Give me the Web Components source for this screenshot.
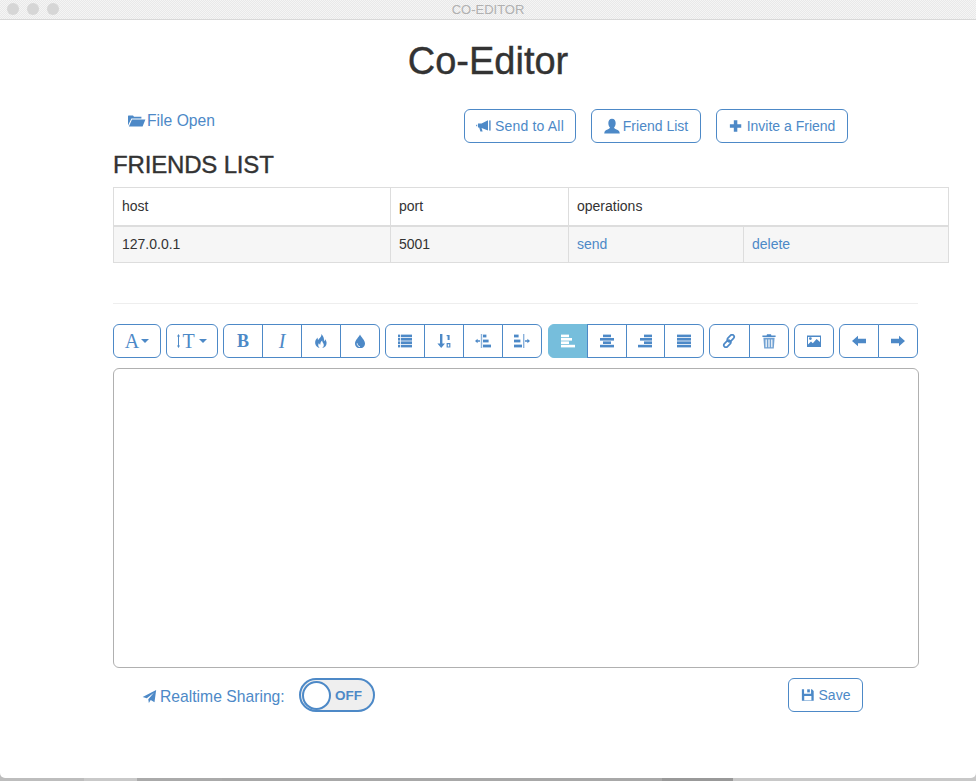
<!DOCTYPE html>
<html><head><meta charset="utf-8">
<style>
html,body{margin:0;padding:0;background:#fff}
body{font-family:"Liberation Sans",Arial,sans-serif;font-size:14px;color:#333}
</style></head><body>
<ce-app>
  <ce-titlebar>CO-EDITOR</ce-titlebar>
  <ce-heading>Co-Editor</ce-heading>
  <ce-actions></ce-actions>
  <ce-friends></ce-friends>
  <ce-toolbar></ce-toolbar>
  <ce-editor></ce-editor>
  <ce-footer></ce-footer>
</ce-app>
<script>
const BLUE='#4d89c7';
const bars=(rows,h=2.6)=>rows.map(([x,w],i)=>`<rect x="${x}" y="${.6+i*3.4}" width="${w}" height="${h}"/>`).join('');
const ICONS={
 folder:'<path d="M0 12.5V3.2Q0 2.6.6 2.6H5L6 3.8H13.4V5.6H3.4L0 12.5Z"/><path d="M4 6.4H17.4L14.6 13.4H.9Z"/>',
 bullhorn:'<path d="M1.2 6.4L.2 7V8L1.2 8.6Z"/><path d="M2 5.4H5.6L12 2.3V12.4L5.6 10L6.6 13.4H4.4L3.2 9.6H2Z"/><rect x="13.2" y="2.4" width="1.4" height="10.2"/>',
 user:'<path d="M7 .6C9.2 .6 10.3 2.4 10.3 4.4C10.3 6.2 9.6 7.7 8.9 8.4C8.9 9.5 9.6 9.9 11 10.4C12.6 11 13.8 11.6 14 14H0C.2 11.6 1.4 11 3 10.4C4.4 9.9 5.1 9.5 5.1 8.4C4.4 7.7 3.7 6.2 3.7 4.4C3.7 2.4 4.8 .6 7 .6Z"/>',
 plus:'<path d="M5 1.5H9V6H13.5V10H9V14.5H5V10H.5V6H5Z"/>',
 send:'<path d="M14.6 1L12.8 14L8.8 11.8L6.8 14.8L6.2 10.8L12.2 4L4.6 9.8L.2 8.4Z"/>',
 save:'<path fill-rule="evenodd" d="M.5 1.5H3V6.5H11V1.5H12L14 3.5V14.5H.5ZM3.2 9V14H11.4V9Z"/><path d="M6.6 1.5H9.6V5H6.6Z"/>',
 updown:'<path d="M1.5 0L3 2.6H2V11.4H3L1.5 14L0 11.4H1V2.6H0Z"/>',
 fire:'<path d="M7.2 0C8 2.6 5.4 4 4.2 6C3.6 5.4 3.6 4.4 3.8 3.6C2 5 .8 7 1.2 9.6C1.6 12 3.6 13.6 5.6 14C4 12.6 3.8 10.6 5 9C5.2 10 5.8 10.6 6.4 10.6C6.2 9 7 7.6 8.2 6.6C8 8.4 9.8 9.4 9.8 11C9.8 12.2 9.2 13.2 8.2 14C10.6 13.6 12.6 11.8 12.6 9C12.6 7.6 12 6.2 11 5.2C11 6 10.6 6.8 10 7.2C10.2 4.4 9.4 1.6 7.2 0Z"/>',
 drop:'<path d="M7 .5C8 3 12 6 12 9.6C12 12.4 9.8 14.4 7 14.4C4.2 14.4 2 12.4 2 9.6C2 6 6 3 7 .5Z"/><path d="M4.2 9.4C4.2 11.2 5.4 12.4 6.8 12.6" fill="none" stroke="#fff" stroke-width="1"/>',
 list:bars([[0,2.2],[0,2.2],[0,2.2],[0,2.2]])+bars([[3,11],[3,11],[3,11],[3,11]]),
 sort:'<path d="M3 0H5.4V9.4H8L4.2 14L.4 9.4H3Z"/><rect x="10.6" y="1" width="2" height="5"/><rect x="9.6" y="1" width="1.4" height="1.2"/><path fill-rule="evenodd" d="M9.6 9H13.4V13.6H9.6ZM10.8 10.2V12.4H12.2V10.2Z"/>',
 indentl:'<path d="M0 7L2.6 4.8V6.3H5V7.7H2.6V9.2Z"/><rect x="5.8" y="0" width="1.4" height="14" opacity=".65"/><rect x="8" y=".6" width="3.4" height="2.8"/><rect x="8" y="5.6" width="5.6" height="2.8"/><rect x="8" y="10.6" width="8" height="2.8"/>',
 indentr:'<rect x="0" y=".6" width="4.6" height="2.8"/><rect x="0" y="5.6" width="6.4" height="2.8"/><rect x="0" y="10.6" width="8" height="2.8"/><rect x="9" y="0" width="1.4" height="14" opacity=".65"/><path d="M16 7L13.4 4.8V6.3H11V7.7H13.4V9.2Z"/>',
 alignl:bars([[0,8],[0,11],[0,8],[0,14]]),
 alignc:bars([[3,8],[0,14],[3,8],[0,14]]),
 alignr:bars([[6,8],[2,12],[6,8],[0,14]]),
 alignj:bars([[0,14],[0,14],[0,14],[0,14]]),
 link:'<g fill="none" stroke="currentColor" stroke-width="1.7"><rect x="4.7" y="2.1" width="8" height="4.2" rx="2.1" transform="rotate(-45 8.7 4.2)"/><rect x="1.3" y="7.7" width="8" height="4.2" rx="2.1" transform="rotate(-45 5.3 9.8)"/></g>',
 trash:'<path d="M5 .2H9L9.4 1.6H13.6V3H.4V1.6H4.6Z"/><path fill-rule="evenodd" d="M1.4 3.8H12.6L11.8 14.6H2.2ZM3.6 5.4V13.2H4.8V5.4ZM6.4 5.4V13.2H7.6V5.4ZM9.2 5.4V13.2H10.4V5.4Z" opacity=".8"/>',
 picture:'<path fill-rule="evenodd" d="M0 1.5H14V13H0ZM3.4 3.2A1.4 1.4 0 1 0 3.41 6A1.4 1.4 0 1 0 3.4 3.2ZM1 10.4L4 7.6L5.8 9.2L9.6 5L13 8V3H1Z"/>',
 left:'<path d="M0 7L6 1.8V4.8H14V9.2H6V12.2Z"/>',
 right:'<path d="M14 7L8 1.8V4.8H0V9.2H8V12.2Z"/>'
};
const VB={folder:'0 0 18 16',updown:'0 0 3 14',bullhorn:'0 0 15 16',send:'0 0 15 16',save:'0 0 15 16',plus:'0 0 15 16',indentl:'0 0 16 14',indentr:'0 0 16 14',trash:'0 0 14 15',user:'0 0 14 14.4'};
class CeIcon extends HTMLElement{
 constructor(){super();const n=this.getAttribute('name'),s=this.getAttribute('size')||14,w=this.getAttribute('w')||s;
  this.attachShadow({mode:'open'}).innerHTML=`<style>:host{display:inline-flex;flex:none;color:inherit}svg{display:block;fill:currentColor}</style><svg width="${w}" height="${s}" viewBox="${VB[n]||'0 0 14 14'}">${ICONS[n]}</svg>`;}
}
customElements.define('ce-icon',CeIcon);
class CeApp extends HTMLElement{constructor(){super();this.attachShadow({mode:'open'}).innerHTML=`<style>:host{display:block;width:976px;height:781px;overflow:hidden;box-sizing:border-box;
 background:linear-gradient(90deg,#bdbdbd 0 84px,#c9c9c9 84px 137px,#aaa 137px 222px,#a8a8a8 222px 662px,#999 662px 733px,#c8c8c8 733px)}
 .win{display:flex;flex-direction:column;height:778px;background:#fff;border-radius:0 0 5px 5px;overflow:hidden}</style><div class="win"><slot></slot></div>`;}}
customElements.define('ce-app',CeApp);
class CeTitlebar extends HTMLElement{constructor(){super();this.attachShadow({mode:'open'}).innerHTML=`<style>:host{display:flex;align-items:center;justify-content:center;position:relative;height:19px;border-bottom:1px solid #d8d8d8;flex:none;color:#b0b0b0;font-size:13px;
 background-color:#efefef;background-image:repeating-conic-gradient(#e9e9e9 0 25%,#f5f5f5 0 50%);background-size:2px 2px}
 .l{position:absolute;left:7px;top:3px;display:flex;gap:8px}.l i{width:12px;height:12px;border-radius:50%;background:#d6d6d6;display:block}</style><div class="l"><i></i><i></i><i></i></div><slot></slot>`;}}
customElements.define('ce-titlebar',CeTitlebar);
class CeHeading extends HTMLElement{constructor(){super();this.attachShadow({mode:'open'}).innerHTML=`<style>:host{display:block;flex:none;text-align:center;font-size:38px;font-weight:500;line-height:40px;padding-top:21px;height:69px;box-sizing:border-box;color:#333;-webkit-text-stroke:.4px #333}</style><slot></slot>`;}}
customElements.define('ce-heading',CeHeading);
class CeBtn extends HTMLElement{constructor(){super();this.attachShadow({mode:'open'}).innerHTML=`<style>:host{display:inline-flex;align-items:center;justify-content:center;gap:4px;box-sizing:border-box;height:34px;border:1px solid ${BLUE};border-radius:6px;color:${BLUE};font-size:14px;background:#fff;flex:none}</style><slot></slot>`;}}
customElements.define('ce-btn',CeBtn);
class CeActions extends HTMLElement{constructor(){super();this.attachShadow({mode:'open'}).innerHTML=`<style>:host{display:flex;flex:none;height:34px;padding:20px 0 0 128px;color:${BLUE};align-items:flex-start}
 .f{display:flex;align-items:center;gap:1px;font-size:15.7px;width:336px;height:24px;box-sizing:border-box}
 .g{display:flex;gap:15px}</style>
 <div class="f"><ce-icon name="folder" size="16" w="18"></ce-icon>File Open</div>
 <div class="g">
 <ce-btn style="width:112px;letter-spacing:.18px"><ce-icon name="bullhorn" size="16" w="15"></ce-icon>Send to All</ce-btn>
 <ce-btn style="width:110px;gap:3px"><ce-icon name="user" size="16" w="16"></ce-icon>Friend List</ce-btn>
 <ce-btn style="width:132px"><ce-icon name="plus"></ce-icon>Invite a Friend</ce-btn>
 </div>`;}}
customElements.define('ce-actions',CeActions);
class CeFriends extends HTMLElement{constructor(){super();this.attachShadow({mode:'open'}).innerHTML=`<style>:host{display:block;flex:none;padding-left:113px}
 h2{margin:0;font-size:24px;font-weight:500;line-height:26px;padding-top:9px;height:44px;box-sizing:border-box;color:#333;letter-spacing:-.17px;-webkit-text-stroke:.4px #333}
 table{border-collapse:collapse;width:836px;table-layout:fixed;font-size:14px;color:#333}
 th,td{border:1px solid #ddd;padding:0 8px;height:36px;text-align:left;font-weight:400;box-sizing:border-box}
 thead th{height:38px;border-bottom-width:2px}
 tbody td{background-color:#f6f6f6;background-image:repeating-conic-gradient(#f0f0f0 0 25%,#fbfbfb 0 50%);background-size:2px 2px;height:37px}
 a{color:${BLUE};text-decoration:none}</style>
 <h2>FRIENDS LIST</h2>
 <table><colgroup><col style="width:277px"><col style="width:178px"><col style="width:175px"><col></colgroup>
 <thead><tr><th>host</th><th>port</th><th colspan="2">operations</th></tr></thead>
 <tbody><tr><td>127.0.0.1</td><td>5001</td><td><a>send</a></td><td><a>delete</a></td></tr></tbody></table>`;}}
customElements.define('ce-friends',CeFriends);
class CeToolbar extends HTMLElement{constructor(){super();
 const ib=(n,a='',x='')=>`<button class="${a}"><ce-icon name="${n}" ${x}></ce-icon></button>`;
 this.attachShadow({mode:'open'}).innerHTML=`<style>:host{display:block;flex:none;padding:40px 0 0 113px;color:${BLUE}}
 hr{margin:0 0 20px;border:0;border-top:1px solid #eee;width:805px}
 .row{display:flex;height:34px}
 .grp{display:flex;flex:none;margin-right:5px}
 button{all:unset;box-sizing:border-box;height:34px;flex:1;display:flex;align-items:center;justify-content:center;border:1px solid ${BLUE};margin-left:-1px;background:#fff;color:${BLUE};font:14px "Liberation Serif",serif}
 button:first-child{margin-left:0;border-radius:6px 0 0 6px}button:last-child{border-radius:0 6px 6px 0}button:only-child{border-radius:6px}
 .on{background:#76bedc;color:#fff;border-color:#76bedc}
 .t{font-size:20px;line-height:1;gap:2px}
 .c{width:0;height:0;border:4px solid transparent;border-top:4px solid ${BLUE};border-bottom:0;margin-left:2px}
 .b{font-weight:700;font-size:18px}.i{font-style:italic;font-size:20px}
 </style><hr><div class="row">
 <div class="grp" style="width:48px"><button class="t"><span>A</span><i class="c" style="margin-left:0"></i></button></div>
 <div class="grp" style="width:52px"><button class="t"><ce-icon name="updown" size="14" w="3"></ce-icon><span>T</span><i class="c"></i></button></div>
 <div class="grp" style="width:157px"><button class="b">B</button><button class="i">I</button>${ib('fire')}${ib('drop')}</div>
 <div class="grp" style="width:157px;margin-right:6px">${ib('list')}${ib('sort')}${ib('indentl','','w="16"')}${ib('indentr','','w="16"')}</div>
 <div class="grp" style="width:156px">${ib('alignl','on')}${ib('alignc')}${ib('alignr')}${ib('alignj')}</div>
 <div class="grp" style="width:80px">${ib('link')}${ib('trash','','size="15" w="14"')}</div>
 <div class="grp" style="width:40px">${ib('picture')}</div>
 <div class="grp" style="width:79px">${ib('left')}${ib('right')}</div>
 </div>`;}}
customElements.define('ce-toolbar',CeToolbar);
class CeEditor extends HTMLElement{constructor(){super();this.attachShadow({mode:'open'}).innerHTML=`<style>:host{display:block;flex:none;box-sizing:border-box;width:806px;height:300px;margin:10px 0 0 113px;border:1px solid #b0b0b0;border-radius:6px;background:#fff}</style>`;}}
customElements.define('ce-editor',CeEditor);
class CeSwitch extends HTMLElement{constructor(){super();this.attachShadow({mode:'open'}).innerHTML=`<style>:host{display:flex;align-items:center;box-sizing:border-box;width:76px;height:34px;border:2px solid ${BLUE};border-radius:17px;background:#efefef;color:${BLUE};font-size:13.5px;font-weight:700;flex:none}
 i{display:block;box-sizing:border-box;width:29px;height:29px;margin-left:1px;border-radius:50%;background:#fff;border:2px solid ${BLUE};flex:none}
 span{margin-left:4px}</style><i></i><span>OFF</span>`;}}
customElements.define('ce-switch',CeSwitch);
class CeFooter extends HTMLElement{constructor(){super();this.attachShadow({mode:'open'}).innerHTML=`<style>:host{display:flex;flex:none;align-items:center;height:34px;margin-top:10px;padding-left:142px;color:${BLUE}}
 .s{display:flex;align-items:center;gap:3px;font-size:15.7px;width:157px;padding-top:3px}
 .sp{width:413px;flex:none}</style>
 <div class="s"><ce-icon name="send" size="15"></ce-icon>Realtime&nbsp;Sharing:</div>
 <ce-switch></ce-switch><div class="sp"></div>
 <ce-btn style="width:75px"><ce-icon name="save"></ce-icon>Save</ce-btn>`;}}
customElements.define('ce-footer',CeFooter);
</script>
</body></html>
